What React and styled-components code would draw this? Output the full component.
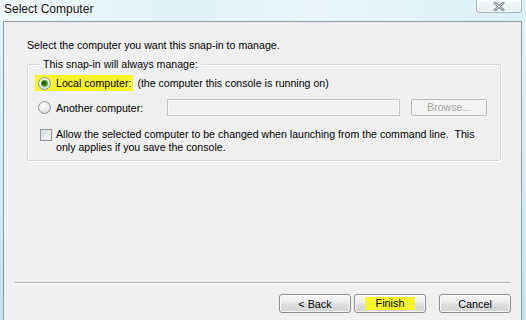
import React from "react";
import styled, { createGlobalStyle } from "styled-components";

const GlobalStyle = createGlobalStyle`
  html, body {
    margin: 0;
    padding: 0;
  }
  body {
    width: 526px;
    height: 320px;
    overflow: hidden;
    background: linear-gradient(180deg, #e3f4f9 0%, #d2ecf4 50%, #c4e4ee 100%);
    font-family: "Liberation Sans", Arial, sans-serif;
  }
`;

const Window = styled.div`
  width: 526px;
  height: 320px;
  display: flex;
  flex-direction: column;
`;

const TitleBar = styled.div`
  height: 21px;
  display: flex;
  justify-content: space-between;
  align-items: flex-start;
  background: linear-gradient(90deg, #eef9fb 0%, #dff3f8 35%, #e9f7fa 60%, #d9f1f6 100%);
`;

const Title = styled.div`
  padding: 2px 0 0 4px;
  font-size: 12px;
  line-height: 14px;
  color: #111;
  text-shadow: 0 0 6px #fff, 0 0 3px #fff;
`;

const CloseButton = styled.div`
  width: 44px;
  height: 12px;
  margin-right: 4px;
  border: 1px solid #a7b4bc;
  border-top: none;
  border-radius: 0 0 4px 4px;
  background: linear-gradient(180deg, #f4fafc 0%, #e3eef2 100%);
  box-shadow: inset 0 0 0 1px rgba(255, 255, 255, 0.7);
  display: flex;
  align-items: center;
  justify-content: center;
`;

const Client = styled.div`
  flex: 1;
  margin: 0 4px 0 3px;
  border: 1px solid #8e9ba3;
  border-bottom: none;
  background: #f0f0f0;
  padding: 16px 20px 7px 23px;
  display: flex;
  flex-direction: column;
  font-size: 10.6px;
  color: #000;
`;

const Intro = styled.div`
  line-height: 14px;
`;

const Group = styled.fieldset`
  margin: 6px 0 0 0;
  padding: 4px 8px 6px 7px;
  border: 1px solid #d5d9dc;
  border-radius: 3px;
  box-shadow: inset 1px 1px 0 #fff, 1px 1px 0 #fff;
  display: flex;
  flex-direction: column;
`;

const Legend = styled.legend`
  margin-left: 5px;
  padding: 0 3px;
  line-height: 13px;
`;

const Row = styled.div`
  display: flex;
  align-items: ${(p) => (p.$top ? "flex-start" : "center")};
  margin-top: ${(p) => p.$gap || 0}px;
`;

const Choice = styled.label`
  display: flex;
  align-items: center;
  gap: 5px;
  height: 16px;
  padding: 0 2px 0 3px;
  background: ${(p) => (p.$marked ? "#f6f52c" : "transparent")};
`;

const Radio = styled.span`
  position: relative;
  width: 11px;
  height: 11px;
  border-radius: 50%;
  border: 1px solid #8c969b;
  background: radial-gradient(circle at 40% 35%, #ffffff 0%, #e4e6e8 60%, #c9cdd0 100%);
  flex: none;

  &::after {
    content: "";
    display: ${(p) => (p.$checked ? "block" : "none")};
    position: absolute;
    left: 2px;
    top: 2px;
    width: 7px;
    height: 7px;
    border-radius: 50%;
    background: radial-gradient(circle at 45% 45%, #1d4d0a 0%, #2f7a12 35%, #6cc43a 75%, #9ee070 100%);
  }
`;

const Detail = styled.span`
  margin-left: 4px;
  line-height: 16px;
`;

const TextBox = styled.div`
  width: 231px;
  height: 15px;
  margin-left: ${(p) => p.$offset}px;
  border: 1px solid #c2c5c8;
  background: #f1f1f1;
  box-shadow: inset 0 0 0 1px #fafafa;
`;

const SmallButton = styled.div`
  width: 74px;
  height: 15px;
  margin-left: 11px;
  border: 1px solid #b9bcbf;
  border-radius: 2px;
  background: #f4f4f4;
  color: #a3a3a3;
  font-size: 10.6px;
  line-height: 15px;
  text-align: center;
`;

const Check = styled.span`
  width: 10px;
  height: 10px;
  margin: 1px 4px 0 5px;
  border: 1px solid #8e9498;
  background: linear-gradient(135deg, #d3d6d9 0%, #eceef0 60%, #ffffff 100%);
  box-shadow: inset 0 0 0 1px #e6e8ea;
  flex: none;
`;

const CheckText = styled.div`
  line-height: 13px;
  white-space: nowrap;
`;

const Footer = styled.div`
  margin-top: auto;
  display: flex;
  flex-direction: column;
`;

const Separator = styled.div`
  height: 1px;
  margin: 0 -10px 0 -12px;
  background: #a9abad;
  border-bottom: 1px solid #ffffff;
`;

const ButtonRow = styled.div`
  display: flex;
  justify-content: flex-end;
  margin: 10px -10px 0 0;
`;

const Button = styled.div`
  width: 70px;
  height: 17px;
  margin-left: ${(p) => p.$gap}px;
  border: 1px solid #8a8c8e;
  border-radius: 3px;
  background: linear-gradient(180deg, #f7f7f7 0%, #ececec 48%, #dedede 52%, #d3d3d3 100%);
  box-shadow: inset 0 0 0 1px rgba(255, 255, 255, 0.75);
  display: flex;
  align-items: center;
  justify-content: center;
  font-size: 10.8px;
  color: #000;
`;

const Marker = styled.span`
  padding: 0 11px;
  line-height: 13px;
  background: #f6f52c;
`;

export default function App() {
  return (
    <>
      <GlobalStyle />
      <Window>
        <TitleBar>
          <Title>Select Computer</Title>
          <CloseButton>
            <svg width="12" height="9" viewBox="0 0 12 9">
              <path d="M2 1 L10 8 M10 1 L2 8" stroke="#6d7a82" strokeWidth="2.6" strokeLinecap="square" />
              <path d="M2 1 L10 8 M10 1 L2 8" stroke="#f3f7f9" strokeWidth="1" strokeLinecap="square" />
            </svg>
          </CloseButton>
        </TitleBar>
        <Client>
          <Intro>Select the computer you want this snap-in to manage.</Intro>
          <Group>
            <Legend>This snap-in will always manage:</Legend>
            <Row>
              <Choice $marked>
                <Radio $checked />
                Local computer:
              </Choice>
              <Detail>(the computer this console is running on)</Detail>
            </Row>
            <Row $gap={8}>
              <Choice>
                <Radio />
                Another computer:
              </Choice>
              <TextBox $offset={22} />
              <SmallButton>Browse...</SmallButton>
            </Row>
            <Row $gap={12} $top>
              <Check />
              <CheckText>
                Allow the selected computer to be changed when launching from the command line.&nbsp; This
                <br />
                only applies if you save the console.
              </CheckText>
            </Row>
          </Group>
          <Footer>
            <Separator />
            <ButtonRow>
              <Button $gap={0}>&lt; Back</Button>
              <Button $gap={3}>
                <Marker>Finish</Marker>
              </Button>
              <Button $gap={13}>Cancel</Button>
            </ButtonRow>
          </Footer>
        </Client>
      </Window>
    </>
  );
}
